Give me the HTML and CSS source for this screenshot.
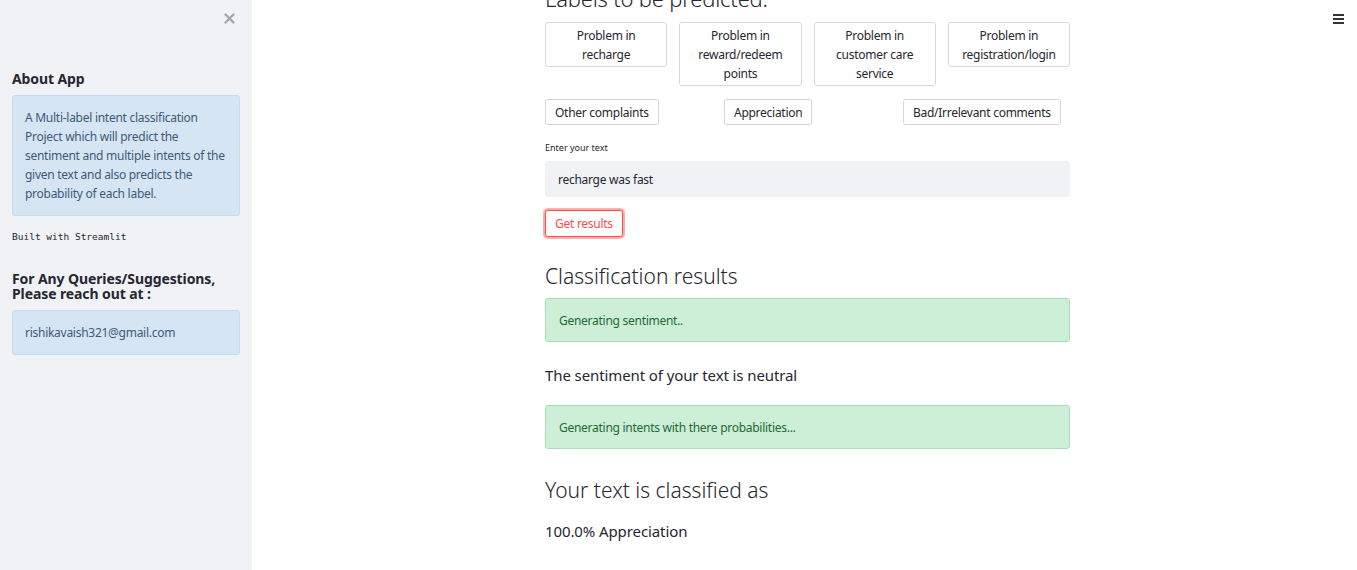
FILE: index.html
```html
<!DOCTYPE html>
<html>
<head>
<meta charset="utf-8">
<link rel="stylesheet" href="styles.css">
</head>
<body>
<div class="app">
  <aside class="sidebar">
    <div class="close-row">
      <svg class="close" width="11" height="11" viewBox="0 0 11 11"><path d="M1.5 1.5 L9.5 9.5 M9.5 1.5 L1.5 9.5" stroke="#a3a7b0" stroke-width="2.4" stroke-linecap="round"/></svg>
    </div>
    <h3 class="side-h">About App</h3>
    <div class="info">A Multi-label intent classification Project which will predict the sentiment and multiple intents of the given text and also predicts the probability of each label.</div>
    <div class="mono">Built with Streamlit</div>
    <h3 class="side-h side-h2">For Any Queries/Suggestions,<br>Please reach out at :</h3>
    <div class="info info-mail">rishikavaish321@gmail.com</div>
  </aside>
  <main class="main">
    <div class="content">
      <h2 class="title">Labels to be predicted:</h2>
      <div class="grid4">
        <button class="btn btn-full">Problem in recharge</button>
        <button class="btn btn-full">Problem in reward/redeem points</button>
        <button class="btn btn-full">Problem in customer care service</button>
        <button class="btn btn-full">Problem in registration/login</button>
      </div>
      <div class="grid3">
        <div><button class="btn">Other complaints</button></div>
        <div><button class="btn">Appreciation</button></div>
        <div><button class="btn">Bad/Irrelevant comments</button></div>
      </div>
      <div class="label">Enter your text</div>
      <div class="input">recharge was fast</div>
      <button class="btn btn-primary">Get results</button>
      <h2 class="sub">Classification results</h2>
      <div class="success">Generating sentiment..</div>
      <p class="strong">The sentiment of your text is neutral</p>
      <div class="success success2">Generating intents with there probabilities...</div>
      <h2 class="sub sub2">Your text is classified as</h2>
      <p class="strong strong2">100.0% Appreciation</p>
    </div>
    <div class="menu"><span></span><span></span><span></span></div>
  </main>
</div>
</body>
</html>
```
FILE: styles.css
```css
* { box-sizing: border-box; }
html, body { margin: 0; padding: 0; height: 100%; overflow: hidden; }
body {
  font-family: "Noto Sans", "Open Sans", sans-serif;
  color: #262730;
  background: #fff;
}
.app { display: flex; height: 570px; }
.sidebar {
  width: 252px;
  flex: none;
  background: #f0f2f6;
  padding: 0 12px;
}
.close-row { display: flex; justify-content: flex-end; align-items: flex-start; padding: 13px 5px 0 0; height: 70px; }
.close { display: block; }
.side-h { margin: 0; font-size: 14px; font-weight: 700; line-height: 18px; color: #262730; letter-spacing: -0.1px; }
.side-h2 { margin-top: 29px; line-height: 15px; }
.info {
  margin-top: 7px;
  background: #d6e5f3;
  border: 1px solid #c7dbef;
  border-radius: 3px;
  padding: 12px;
  font-size: 12px;
  letter-spacing: -0.27px;
  line-height: 19px;
  color: #3d5a78;
}
.info-mail { margin-top: 9px; }
.mono {
  margin-top: 15px;
  font-family: "DejaVu Sans Mono", "Liberation Mono", monospace;
  font-size: 9.5px;
  color: #262730;
}
.main { flex: 1; position: relative; display: flex; justify-content: center; padding-left: 6px; }
.content { width: 525px; margin-top: -17px; }
.title { margin: 0; font-size: 22px; font-weight: 300; line-height: 30px; letter-spacing: -0.2px; }
.grid4 { display: grid; grid-template-columns: repeat(4, 1fr); gap: 12px; margin-top: 9px; align-items: start; }
.grid3 { display: grid; grid-template-columns: repeat(3, 1fr); gap: 12px; margin-top: 13px; }
.grid3 > div { display: flex; }
.btn {
  display: block;
  font-family: inherit;
  font-size: 12px;
  letter-spacing: -0.27px;
  line-height: 19px;
  color: #262730;
  background: #fff;
  border: 1px solid #d6d7db;
  border-radius: 3px;
  padding: 3px 9px 2px;
}
.btn-full { width: 100%; }
.label { font-size: 9px; margin-top: 16px; line-height: 14px; }
.input {
  margin-top: 6px;
  height: 36px;
  background: #f0f2f6;
  border-radius: 3px;
  padding: 0 13px;
  display: flex;
  align-items: center;
  font-size: 12px;
  letter-spacing: -0.27px;
}
.btn-primary {
  margin-top: 13px;
  color: #ff4b4b;
  border-color: #ff4b4b;
  box-shadow: 0 0 0 2px rgba(255, 75, 75, 0.45);
  padding: 3px 9px;
}
.sub { margin: 24px 0 0; font-size: 21px; font-weight: 300; line-height: 30px; }
.sub2 { margin-top: 26px; }
.success {
  margin-top: 7px;
  background: #cdeed7;
  border: 1px solid #a7e0b7;
  border-radius: 3px;
  height: 44px;
  display: flex;
  align-items: center;
  padding: 0 13px;
  font-size: 12px;
  letter-spacing: -0.27px;
  color: #1d6a35;
}
.success2 { margin-top: 19px; }
.strong { margin: 22px 0 0; font-size: 15px; font-weight: 400; line-height: 22px; letter-spacing: -0.1px; }
.strong2 { margin-top: 15px; }
.menu { position: absolute; top: 14px; right: 13px; display: flex; flex-direction: column; gap: 2px; }
.menu span { display: block; width: 11px; height: 2px; background: #333; }
```
